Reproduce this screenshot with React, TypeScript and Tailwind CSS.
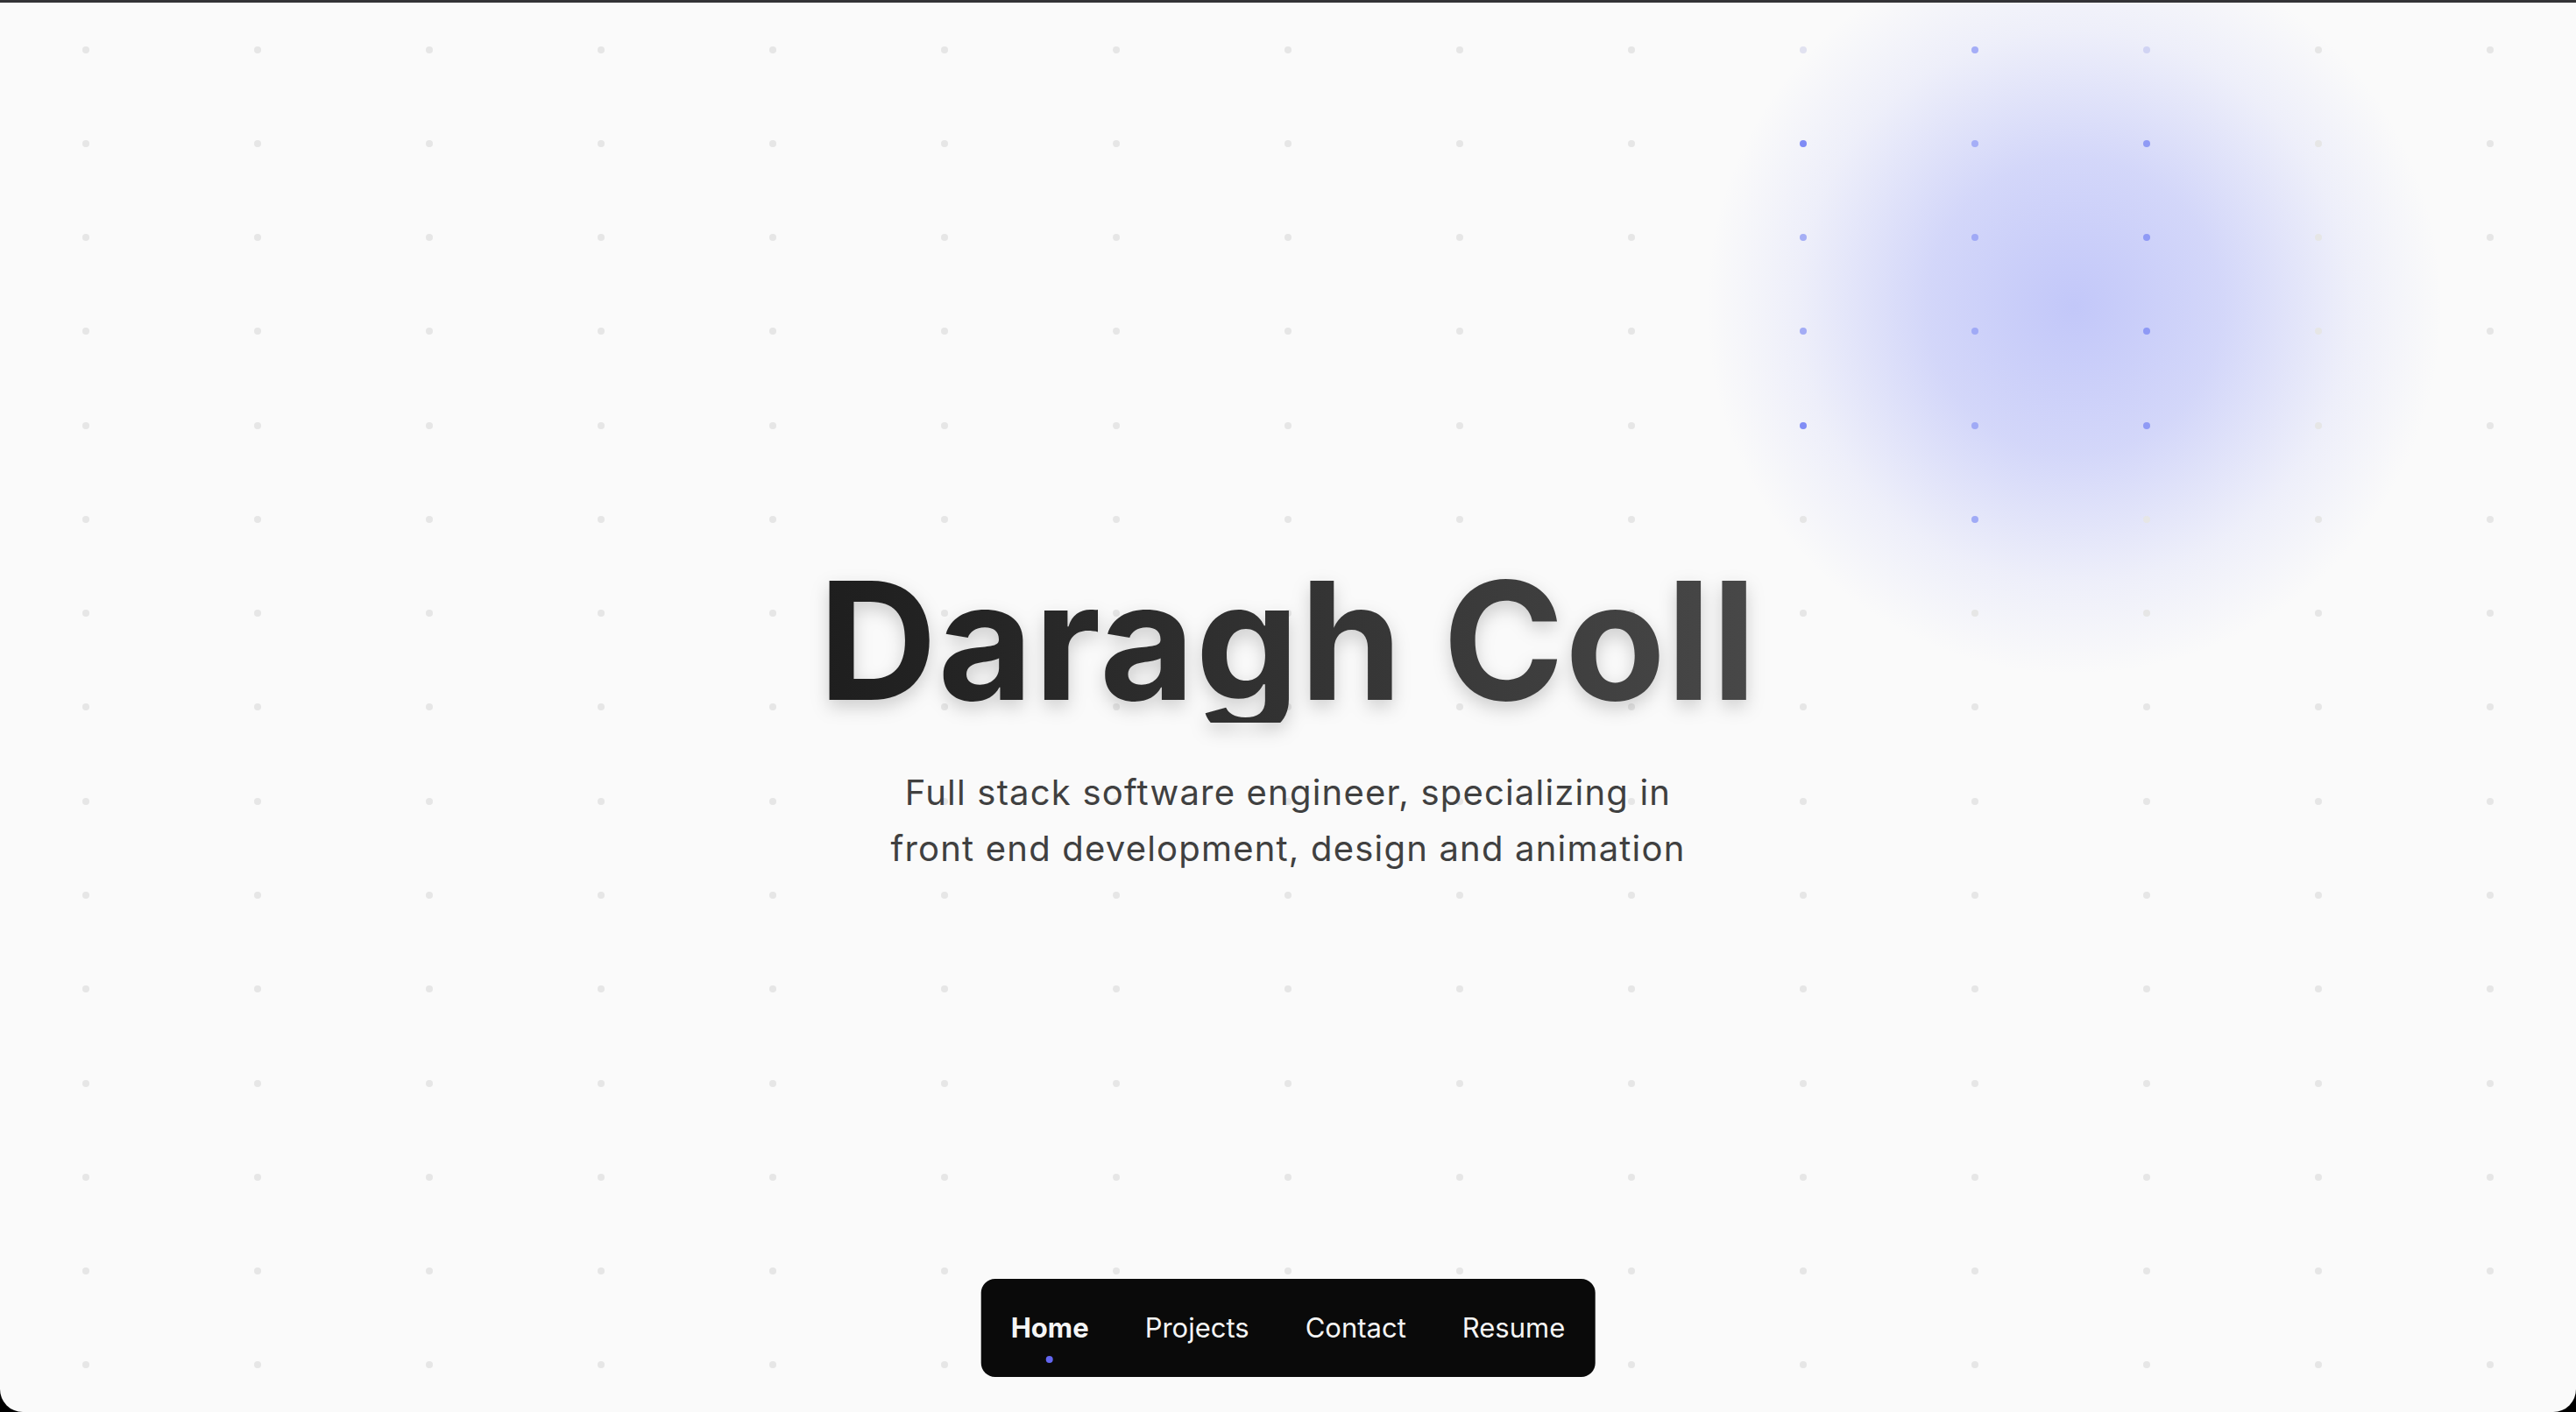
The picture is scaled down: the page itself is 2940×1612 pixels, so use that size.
import React from "react";

const COLS = 15;
const ROWS = 15;

const special: Record<string, string> = {
  "10,0": "#e1e2f0",
  "11,0": "#a5adf7",
  "12,0": "#d0d3f3",
  "10,1": "#7f8bf5",
  "11,1": "#a5aef7",
  "12,1": "#909bf5",
  "10,2": "#a5aef5",
  "11,2": "#a0a9f6",
  "12,2": "#8f9af5",
  "10,3": "#a3acf5",
  "11,3": "#a0aaf6",
  "12,3": "#8e99f5",
  "10,4": "#818df5",
  "11,4": "#a0aaf6",
  "12,4": "#8f9af5",
  "11,5": "#a0aaf6",
};

function Dots() {
  const cells: React.ReactNode[] = [];
  for (let r = 0; r < ROWS; r++) {
    for (let c = 0; c < COLS; c++) {
      const col = special[`${c},${r}`];
      cells.push(
        <div key={`${r}-${c}`} className="flex items-center justify-center">
          {col ? (
            <div className="w-2 h-2 rounded-full" style={{ backgroundColor: col }} />
          ) : (
            <div className="w-2 h-2 rounded-full bg-[#e6e6e6]" />
          )}
        </div>
      );
    }
  }
  return (
    <div className="absolute inset-0 grid grid-cols-[repeat(15,minmax(0,1fr))] grid-rows-[repeat(15,minmax(0,1fr))]">
      {cells}
    </div>
  );
}

export default function App() {
  return (
    <div
      className="h-screen w-full bg-black overflow-hidden flex flex-col"
      style={{ fontFamily: "Inter, 'Noto Sans', sans-serif" }}
    >
      <div className="h-[3px] shrink-0 bg-[#333336]" />
      <div className="relative flex-1 bg-[#fafafa] rounded-b-[26px] overflow-hidden flex flex-col">
        <div className="absolute left-[1947px] top-[-73px] w-[840px] h-[840px] rounded-full bg-[radial-gradient(closest-side,rgba(129,140,248,0.46),rgba(129,140,248,0.32)_40%,rgba(129,140,248,0.1)_75%,rgba(129,140,248,0)_100%)]" />
        <Dots />
        <main className="relative z-10 flex-1 flex flex-col items-center justify-center pt-[24px]">
          <h1 className="text-[187px] font-bold leading-none tracking-[0.006em] bg-linear-to-r from-[#1e1e1e] to-[#484848] bg-clip-text text-transparent drop-shadow-[0_8px_10px_rgba(0,0,0,0.18)]">
            Daragh Coll
          </h1>
          <p className="mt-12 text-[40px] leading-[64px] tracking-[0.03em] text-[#404040] text-center">
            Full stack software engineer, specializing in
            <br />
            front end development, design and animation
          </p>
        </main>
        <nav className="absolute z-20 left-1/2 -translate-x-1/2 bottom-10 h-[112px] flex items-center px-0.5 rounded-2xl bg-[#0a0a0a] text-[31px] text-[#f5f5f5]">
          <a className="relative px-8 font-bold">
            Home
            <span className="absolute left-1/2 -translate-x-1/2 top-[55px] w-2 h-2 rounded-full bg-[#6366f1]" />
          </a>
          <a className="px-8">Projects</a>
          <a className="px-8">Contact</a>
          <a className="px-8">Resume</a>
        </nav>
      </div>
    </div>
  );
}
